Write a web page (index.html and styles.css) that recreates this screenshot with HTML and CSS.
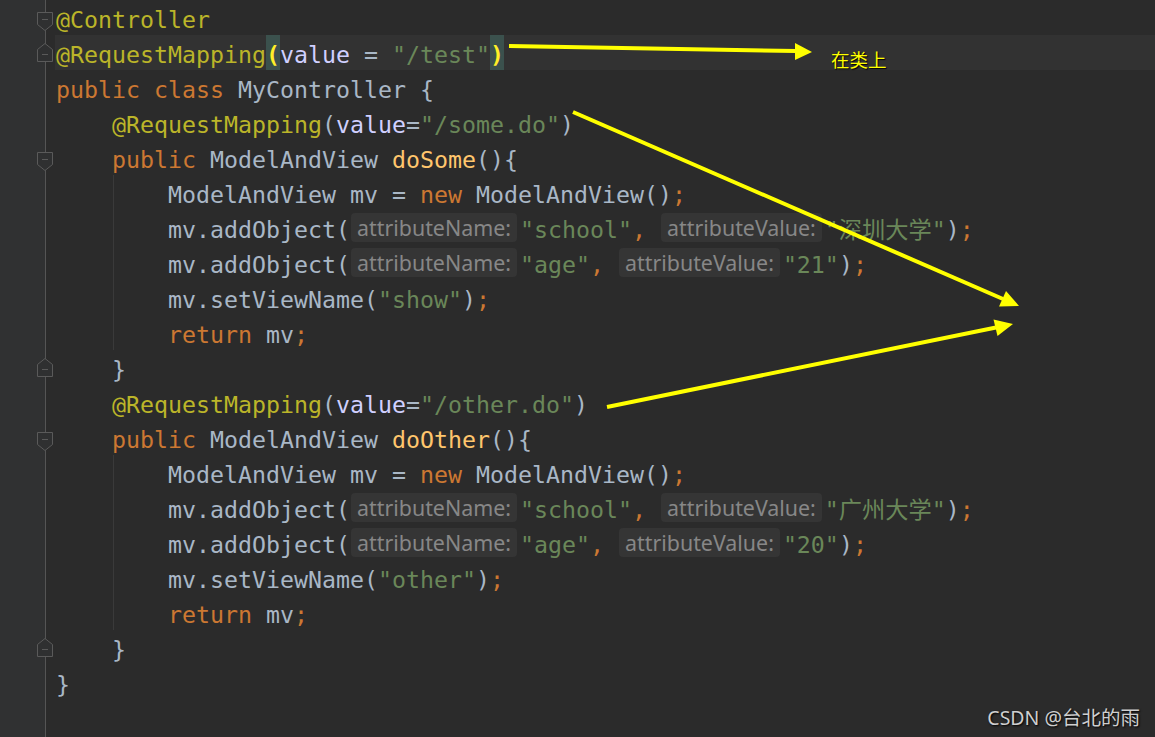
FILE: index.html
```html
<!DOCTYPE html>
<html>
<head>
    <meta charset="utf-8">
    <title>MyController.java</title>
    <link rel="stylesheet" href="styles.css">
</head>
<body>
    <div class="editor">

        <div class="gutter">
            <div class="row"><svg class="fold" width="16" height="19" viewBox="0 0 16 19"><path d="M0.5 0.5H15.5V12.5L8 18.5L0.5 12.5Z"/><path d="M5 7.5H11"/></svg></div>
            <div class="row"><svg class="fold up" width="16" height="19" viewBox="0 0 16 19"><path d="M8 0.5L15.5 6.5V18.5H0.5V6.5Z"/><path d="M5 11.5H11"/></svg></div>
            <div class="row"></div>
            <div class="row"></div>
            <div class="row"><svg class="fold" width="16" height="19" viewBox="0 0 16 19"><path d="M0.5 0.5H15.5V12.5L8 18.5L0.5 12.5Z"/><path d="M5 7.5H11"/></svg></div>
            <div class="row"></div>
            <div class="row"></div>
            <div class="row"></div>
            <div class="row"></div>
            <div class="row"></div>
            <div class="row"><svg class="fold up" width="16" height="19" viewBox="0 0 16 19"><path d="M8 0.5L15.5 6.5V18.5H0.5V6.5Z"/><path d="M5 11.5H11"/></svg></div>
            <div class="row"></div>
            <div class="row"><svg class="fold" width="16" height="19" viewBox="0 0 16 19"><path d="M0.5 0.5H15.5V12.5L8 18.5L0.5 12.5Z"/><path d="M5 7.5H11"/></svg></div>
            <div class="row"></div>
            <div class="row"></div>
            <div class="row"></div>
            <div class="row"></div>
            <div class="row"></div>
            <div class="row"><svg class="fold up" width="16" height="19" viewBox="0 0 16 19"><path d="M8 0.5L15.5 6.5V18.5H0.5V6.5Z"/><path d="M5 11.5H11"/></svg></div>
            <div class="row"></div>
            <div class="row"></div>
        </div>

        <div class="code">
<div class="ln"><span class="an">@Controller</span></div>
<div class="ln cur"><span class="an">@RequestMapping</span><span class="bm">(</span><span class="pr">value</span> = <span class="st">"/test"</span><span class="bm">)</span></div>
<div class="ln"><span class="kw">public class</span> MyController {</div>
<div class="ln">    <span class="an">@RequestMapping</span>(<span class="pr">value</span>=<span class="st">"/some.do"</span>)</div>
<div class="ln">    <span class="kw">public</span> ModelAndView <span class="fn">doSome</span>(){</div>
<div class="ln g">        ModelAndView mv = <span class="kw">new</span> ModelAndView()<span class="kw">;</span></div>
<div class="ln g">        mv.addObject(<span class="hint">attributeName:</span><span class="st">"school"</span><span class="kw">,</span> <span class="hint">attributeValue:</span><span class="st">"深圳大学"</span>)<span class="kw">;</span></div>
<div class="ln g">        mv.addObject(<span class="hint">attributeName:</span><span class="st">"age"</span><span class="kw">,</span> <span class="hint">attributeValue:</span><span class="st">"21"</span>)<span class="kw">;</span></div>
<div class="ln g">        mv.setViewName(<span class="st">"show"</span>)<span class="kw">;</span></div>
<div class="ln g">        <span class="kw">return</span> mv<span class="kw">;</span></div>
<div class="ln">    }</div>
<div class="ln">    <span class="an">@RequestMapping</span>(<span class="pr">value</span>=<span class="st">"/other.do"</span>)</div>
<div class="ln">    <span class="kw">public</span> ModelAndView <span class="fn">doOther</span>(){</div>
<div class="ln g">        ModelAndView mv = <span class="kw">new</span> ModelAndView()<span class="kw">;</span></div>
<div class="ln g">        mv.addObject(<span class="hint">attributeName:</span><span class="st">"school"</span><span class="kw">,</span> <span class="hint">attributeValue:</span><span class="st">"广州大学"</span>)<span class="kw">;</span></div>
<div class="ln g">        mv.addObject(<span class="hint">attributeName:</span><span class="st">"age"</span><span class="kw">,</span> <span class="hint">attributeValue:</span><span class="st">"20"</span>)<span class="kw">;</span></div>
<div class="ln g">        mv.setViewName(<span class="st">"other"</span>)<span class="kw">;</span></div>
<div class="ln g">        <span class="kw">return</span> mv<span class="kw">;</span></div>
<div class="ln">    }</div>
<div class="ln">}</div>
<div class="ln"> </div>
        </div>

        <!-- hand drawn arrows on top of the screenshot -->
        <svg class="arrows" width="1155" height="737" viewBox="0 0 1155 737">
            <line x1="509" y1="46" x2="796" y2="51"/>
            <polygon points="812,52 795,43 795,60"/>
            <line x1="573" y1="112" x2="1003" y2="299"/>
            <polygon points="1019,306 999,306.5 1006,291"/>
            <line x1="607" y1="407" x2="996" y2="327.5"/>
            <polygon points="1013,324 997.5,336 993.5,319.5"/>
        </svg>
        <div class="note">在类上</div>

        <div class="mark">CSDN @台北的雨</div>
    </div>
</body>
</html>
```

FILE: styles.css
```css
html, body {
    margin:0;
    padding:0;
}

body {
    background:#2B2B2B;
    overflow:hidden;
}

.editor {
    position:relative;
    display:flex;
    width:1155px;
    height:737px;
    overflow:hidden;
    background:#2B2B2B;
}

.gutter {
    flex:0 0 55px;
    display:flex;
    flex-direction:column;
    background:
        linear-gradient(#555555, #555555) 45px 0 / 1px 100% no-repeat,
        linear-gradient(to right, #303132 45px, #2B2B2B 45px);
}

.gutter .row {
    height:35px;
    flex:0 0 35px;
    padding-left:37px;
    box-sizing:border-box;
}

.fold {
    display:block;
    margin-top:12px;
}
.fold.up {
    margin-top:8px;
}
.fold path {
    fill:#2F3031;
    stroke:#5A5A5A;
    stroke-width:1;
}

.code {
    flex:1;
    font-family:"DejaVu Sans Mono", "Noto Sans CJK SC", monospace;
    font-size:23.25px;
    color:#A9B7C6;
}

.ln {
    height:35px;
    line-height:39px;
    padding-left:1px;
    white-space:pre;
}
.ln.cur {
    background:#323232;
}
.ln.g {
    background:linear-gradient(#3A3A3A, #3A3A3A) 58px 0 / 1px 100% no-repeat;
}

.an { color:#BBB529; }
.kw { color:#CC7832; }
.st { color:#6A8759; }
.fn { color:#FFC66D; }
.pr { color:#D0D0FF; }

.bm {
    display:inline-block;
    height:35px;
    vertical-align:top;
    background:#3B514D;
    color:#FFEF28;
    font-weight:bold;
}

.hint {
    display:inline-block;
    height:29px;
    line-height:29px;
    margin:0 3px 0 1px;
    padding:0 6px;
    vertical-align:2px;
    border-radius:4px;
    background:#353535;
    color:#878787;
    font-family:"Noto Sans", sans-serif;
    font-size:21.4px;
}

.arrows {
    position:absolute;
    left:0;
    top:0;
    pointer-events:none;
}
.arrows line {
    stroke:#FFFF00;
    stroke-width:4;
}
.arrows polygon {
    fill:#FFFF00;
}

.note {
    position:absolute;
    left:831px;
    top:47px;
    color:#FFFF00;
    font-family:"Noto Sans CJK SC", sans-serif;
    font-size:18.5px;
    line-height:24px;
    text-shadow:1px 1px 1px #000;
}

.mark {
    position:absolute;
    right:15px;
    bottom:7px;
    color:#CFCFCF;
    font-family:"Noto Sans", "Noto Sans CJK SC", sans-serif;
    font-size:19.5px;
    line-height:24px;
    text-shadow:1px 1px 2px #000;
}
```
